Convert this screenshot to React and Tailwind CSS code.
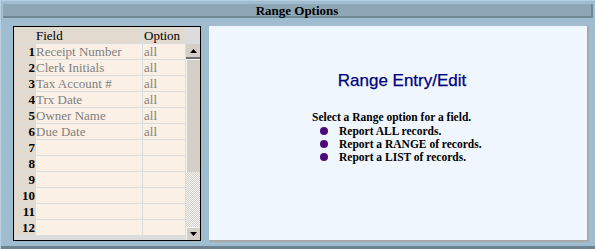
import React from 'react';

const rows = [
  ['Receipt Number', 'all'],
  ['Clerk Initials', 'all'],
  ['Tax Account #', 'all'],
  ['Trx Date', 'all'],
  ['Owner Name', 'all'],
  ['Due Date', 'all'],
  ['', ''],
  ['', ''],
  ['', ''],
  ['', ''],
  ['', ''],
  ['', ''],
];

const serif = "font-['Liberation_Serif',serif]";

function Scrollbar() {
  return (
    <div className="flex w-[14px] flex-col bg-[#d4d0c8]">
      <div className="h-[17px] bg-[#dcdcdc]" />
      <div className="flex h-[15px] items-center justify-center border-b-2 border-[#6e6e6e] bg-[#d4d0c8]">
        <svg width="7" height="4" viewBox="0 0 7 4"><path d="M3.5 0L7 4H0z" fill="#000" /></svg>
      </div>
      <div className="h-[113px] border-l border-t border-[#f4f4f4] bg-[#d4d0c8]" />
      <div className="flex-1 bg-[repeating-conic-gradient(#d4d0c8_0_25%,#f4f4f4_0_50%)] bg-[length:2px_2px]" />
      <div className="flex h-[13px] items-center justify-center border-l border-t border-[#f4f4f4] bg-[#d4d0c8]">
        <svg width="7" height="4" viewBox="0 0 7 4"><path d="M0 0H7L3.5 4z" fill="#000" /></svg>
      </div>
    </div>
  );
}

function Grid() {
  return (
    <div className={`flex h-[215px] w-[188px] border border-black bg-[#dcdcdc] ${serif} text-[13px] leading-none`}>
      <div className="flex w-[172px] flex-col">
        <div className="flex h-[16px] bg-[#e2d9cf] text-black">
          <div className="w-[22px]" />
          <div className="flex w-[107px] items-center border-r border-[#dcdcdc]">Field</div>
          <div className="flex flex-1 items-center pl-px">Option</div>
        </div>
        {rows.map((r, i) => (
          <div key={i} className="flex h-[16px] border-t border-[#dcdcdc] bg-[#faf0e6]">
            <div className="flex w-[22px] items-center justify-end bg-[#e2d9cf] pr-px font-bold text-black">{i + 1}</div>
            <div className="flex w-[107px] items-center border-r border-[#dcdcdc] text-[#808080]">{r[0]}</div>
            <div className="flex flex-1 items-center pl-px text-[#808080]">{r[1]}</div>
          </div>
        ))}
        <div className="flex-1 border-t border-[#dcdcdc]" />
      </div>
      <div className="w-px bg-[#dcdcdc]" />
      <Scrollbar />
    </div>
  );
}

function InfoPanel() {
  const items = ['Report ALL records.', 'Report a RANGE of records.', 'Report a LIST of records.'];
  return (
    <div className="flex h-[216px] w-[380px] flex-col border-b-2 border-r-2 border-[#a8a8a8] bg-[#eff6fd]">
      <div className="mt-[46px] self-center pl-[8px] font-['Liberation_Sans',sans-serif] text-[17px] leading-none text-[#000080] [-webkit-text-stroke:0.25px_#000080]">
        Range Entry/Edit
      </div>
      <div className={`ml-[103px] mt-[22px] flex flex-col gap-px ${serif} text-[11.5px] font-bold leading-[12px] text-black`}>
        <div className="mb-px">Select a Range option for a field.</div>
        {items.map((t) => (
          <div key={t} className="flex items-center">
            <span className="ml-[8px] mr-[11px] inline-block h-[8px] w-[8px] rounded-full bg-[#4b0a7a]" />
            {t}
          </div>
        ))}
      </div>
    </div>
  );
}

export default function App() {
  return (
    <div className="flex h-[249px] w-[595px] flex-col border-l border-t border-[#b6d0e2] bg-[#a0bccf]">
      <div className="mx-[2px] mt-[3px] flex h-[14px] items-center justify-center border-b-2 border-r-2 border-[#718896] bg-[#8ea7b7]">
        <span className={`${serif} text-[13px] font-bold leading-none text-black`}>Range Options</span>
      </div>
      <div className="mt-[8px] flex items-start gap-[8px] pl-[12px]">
        <Grid />
        <InfoPanel />
      </div>
      <div className="mt-auto h-[3px] bg-[#6d8291]" />
    </div>
  );
}
